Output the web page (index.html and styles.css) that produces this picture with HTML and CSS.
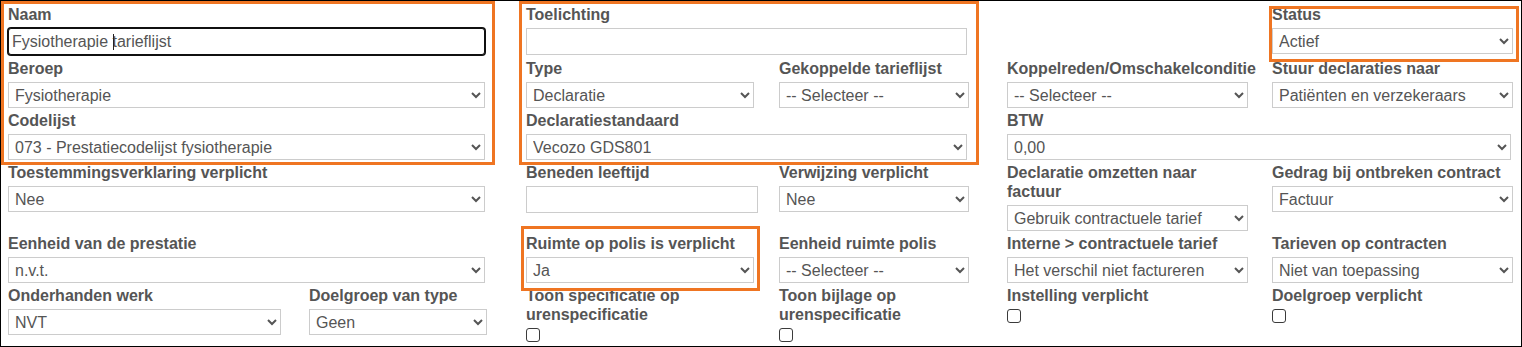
FILE: index.html
```html
<!DOCTYPE html>
<html lang="nl">
<head>
  <meta charset="UTF-8">
  <meta name="viewport" content="width=device-width, initial-scale=1.0">
  <title>Tarieflijst bewerken</title>
  <link rel="stylesheet" href="styles.css">
</head>
<body>

  <div class="panel">
    <form class="form-grid">

      <!-- row 1 -->
      <div class="field span-2 w-left">
        <label for="naam">Naam</label>
        <input type="text" id="naam" class="is-focused" value="Fysiotherapie tarieflijst">
        <span class="caret"></span>
      </div>
      <div class="field span-2 w-mid">
        <label for="toelichting">Toelichting</label>
        <input type="text" id="toelichting">
      </div>
      <div class="field col-last w-c6">
        <label for="status">Status</label>
        <select id="status"><option>Actief</option></select>
      </div>

      <!-- row 2 -->
      <div class="field span-2 w-left">
        <label for="beroep">Beroep</label>
        <select id="beroep"><option>Fysiotherapie</option></select>
      </div>
      <div class="field w-c3">
        <label for="type">Type</label>
        <select id="type"><option>Declaratie</option></select>
      </div>
      <div class="field w-c4">
        <label for="gekoppeld">Gekoppelde tarieflijst</label>
        <select id="gekoppeld"><option>-- Selecteer --</option></select>
      </div>
      <div class="field w-c5">
        <label for="koppelreden" class="nowrap">Koppelreden/Omschakelconditie</label>
        <select id="koppelreden"><option>-- Selecteer --</option></select>
      </div>
      <div class="field w-c6">
        <label for="stuur">Stuur declaraties naar</label>
        <select id="stuur"><option>Patiënten en verzekeraars</option></select>
      </div>

      <!-- row 3 -->
      <div class="field span-2 w-left">
        <label for="codelijst">Codelijst</label>
        <select id="codelijst"><option>073 - Prestatiecodelijst fysiotherapie</option></select>
      </div>
      <div class="field span-2 w-mid">
        <label for="standaard">Declaratiestandaard</label>
        <select id="standaard"><option>Vecozo GDS801</option></select>
      </div>
      <div class="field span-2 w-right">
        <label for="btw">BTW</label>
        <select id="btw"><option>0,00</option></select>
      </div>

      <!-- row 4 -->
      <div class="field span-2 w-left">
        <label for="toestemming">Toestemmingsverklaring verplicht</label>
        <select id="toestemming"><option>Nee</option></select>
      </div>
      <div class="field w-c3">
        <label for="leeftijd">Beneden leeftijd</label>
        <input type="text" id="leeftijd" class="input-age">
      </div>
      <div class="field w-c4">
        <label for="verwijzing">Verwijzing verplicht</label>
        <select id="verwijzing"><option>Nee</option></select>
      </div>
      <div class="field w-c5">
        <label for="omzetten">Declaratie omzetten naar factuur</label>
        <select id="omzetten"><option>Gebruik contractuele tarief</option></select>
      </div>
      <div class="field w-c6">
        <label for="gedrag">Gedrag bij ontbreken contract</label>
        <select id="gedrag"><option>Factuur</option></select>
      </div>

      <!-- row 5 -->
      <div class="field span-2 w-left">
        <label for="eenheid">Eenheid van de prestatie</label>
        <select id="eenheid"><option>n.v.t.</option></select>
      </div>
      <div class="field w-c3">
        <label for="ruimte">Ruimte op polis is verplicht</label>
        <select id="ruimte"><option>Ja</option></select>
      </div>
      <div class="field w-c4">
        <label for="eenheid-polis">Eenheid ruimte polis</label>
        <select id="eenheid-polis"><option>-- Selecteer --</option></select>
      </div>
      <div class="field w-c5">
        <label for="intern">Interne &gt; contractuele tarief</label>
        <select id="intern"><option>Het verschil niet factureren</option></select>
      </div>
      <div class="field w-c6">
        <label for="tarieven">Tarieven op contracten</label>
        <select id="tarieven"><option>Niet van toepassing</option></select>
      </div>

      <!-- row 6 -->
      <div class="field w-c1">
        <label for="onderhanden">Onderhanden werk</label>
        <select id="onderhanden"><option>NVT</option></select>
      </div>
      <div class="field w-c2">
        <label for="doelgroep-type">Doelgroep van type</label>
        <select id="doelgroep-type"><option>Geen</option></select>
      </div>
      <div class="field w-c3">
        <label for="toon-spec">Toon specificatie op urenspecificatie</label>
        <input type="checkbox" id="toon-spec">
      </div>
      <div class="field w-c4">
        <label for="toon-bijlage">Toon bijlage op urenspecificatie</label>
        <input type="checkbox" id="toon-bijlage">
      </div>
      <div class="field w-c5">
        <label for="instelling">Instelling verplicht</label>
        <input type="checkbox" id="instelling">
      </div>
      <div class="field w-c6">
        <label for="doelgroep">Doelgroep verplicht</label>
        <input type="checkbox" id="doelgroep">
      </div>

    </form>

    <!-- highlight markers -->
    <div class="mark mark-basis"></div>
    <div class="mark mark-declaratie"></div>
    <div class="mark mark-status"></div>
    <div class="mark mark-polis"></div>
  </div>

</body>
</html>
```

FILE: styles.css
```css
* {
  box-sizing: border-box;
}

body {
  margin: 0;
  font-family: "Liberation Sans", Arial, sans-serif;
  font-size: 16px;
  color: #555;
  background-color: white;
}

.panel {
  position: relative;
  height: 347px;
  border: 1px solid #000;
  padding: 4px 7px;
  overflow: hidden;
}

.form-grid {
  display: grid;
  grid-template-columns: 301px 217px 253px 228px 265px 242px;
  align-items: start;
  margin: 0;
}

.span-2 {
  grid-column: span 2;
}

.col-last {
  grid-column: 6;
}

.field {
  position: relative;
}

.w-left { width: 477px; }
.w-mid { width: 441px; }
.w-right { width: 504px; }
.w-c1 { width: 273px; }
.w-c2 { width: 178px; }
.w-c3 { width: 228px; }
.w-c4 { width: 190px; }
.w-c5 { width: 241px; }
.w-c6 { width: 241px; }

label {
  display: block;
  font-weight: bold;
  line-height: 19px;
  margin-bottom: 4px;
  color: #555;
}

.nowrap {
  white-space: nowrap;
}

select,
input[type="text"] {
  display: block;
  width: 100%;
  font-family: inherit;
  font-size: 16px;
  color: #555;
  background-color: white;
  border: 1px solid #ccc;
  border-radius: 0;
}

select {
  height: 26px;
  padding: 0 2px;
  margin: 0 0 3px;
}

input[type="text"] {
  height: 27px;
  padding: 0 3px;
  margin: 0 0 4px;
}

input.is-focused {
  border-color: #101010;
  border-radius: 3px;
  box-shadow: 0 0 0 1px #101010;
  outline: none;
}

.input-age {
  width: 232px !important;
}

.caret {
  position: absolute;
  left: 105px;
  top: 29px;
  width: 1px;
  height: 16px;
  background-color: #222;
}

input[type="checkbox"] {
  appearance: none;
  -webkit-appearance: none;
  display: block;
  width: 14px;
  height: 14px;
  margin: 2px 0 0;
  border: 1px solid #3b3b3b;
  border-radius: 3px;
  background-color: white;
}

/* orange highlight frames drawn over the form */
.mark {
  position: absolute;
  border: 3px solid #ef7522;
  pointer-events: none;
}

.mark-basis {
  left: 0;
  top: 0;
  width: 494px;
  height: 164px;
}

.mark-declaratie {
  left: 518px;
  top: 0;
  width: 460px;
  height: 164px;
}

.mark-status {
  left: 1268px;
  top: 5px;
  width: 250px;
  height: 56px;
}

.mark-polis {
  left: 520px;
  top: 225px;
  width: 239px;
  height: 65px;
}
```
